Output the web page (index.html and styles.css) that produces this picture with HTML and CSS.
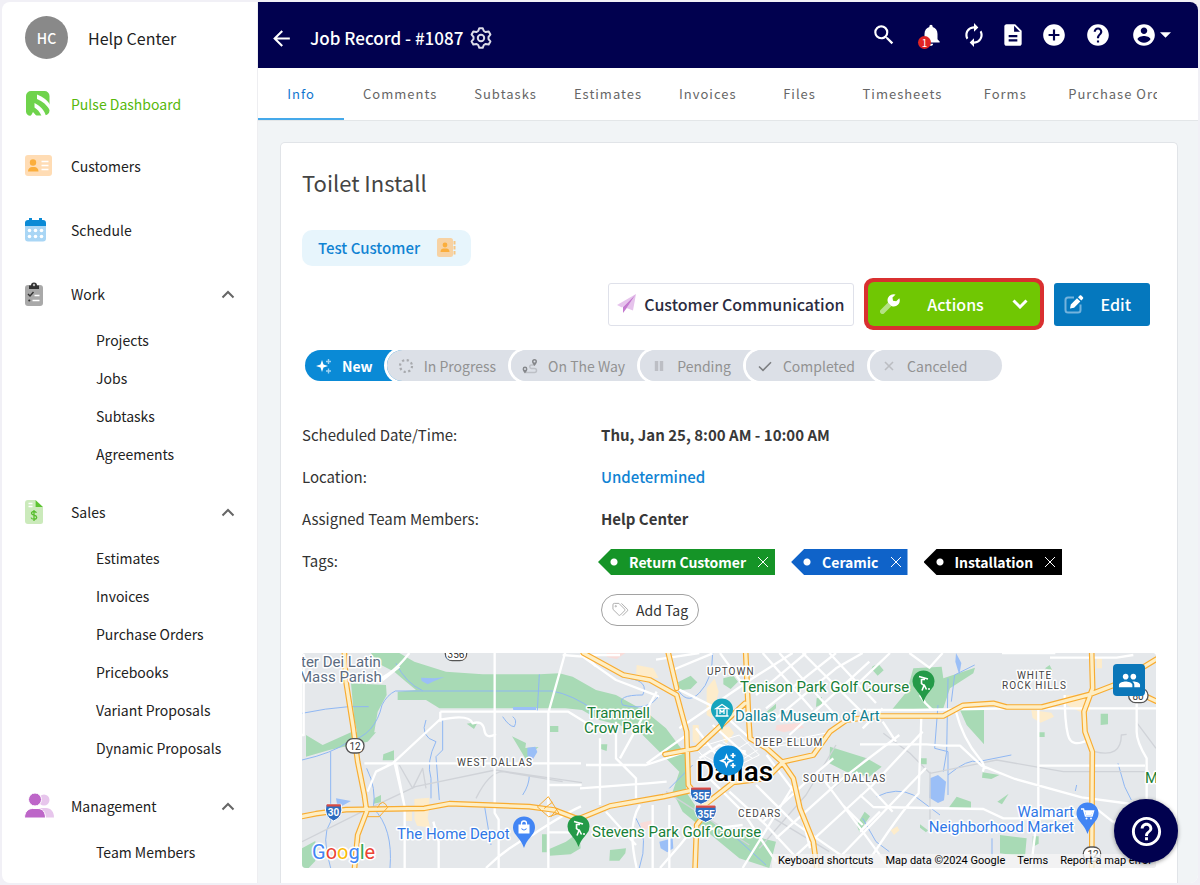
FILE: index.html
```html
<!DOCTYPE html>
<html lang="en">
<head>
<meta charset="utf-8">
<meta name="viewport" content="width=device-width, initial-scale=1">
<title>Job Record - #1087</title>
<link rel="stylesheet" href="styles.css">
</head>
<body>
<div class="app">
  <aside class="sidebar">
    <div class="profile"><span class="avatar">HC</span><span class="profile-name">Help Center</span></div>
    <nav class="nav" aria-label="Main">
      <a class="nav-row nav-active" href="#">
        <svg class="nav-icon" viewBox="0 0 30 30"><path fill="#6fd34c" d="M6 2h13.500a5 5 0 0 1 5 5v14.500a5 5 0 0 1-5 5H6a4 4 0 0 1-5-4V7a5 5 0 0 1 5-5z" transform="translate(1 0)"/><path fill="#fff" d="M13 5.500c6 2.500 11 6 13.500 11v5.500C23 16 18.500 12 13 10zM10.500 14c6 3 10 7.500 11.500 13h-4.500c-1.500-4-4.500-7-7-8.500zM9 23l4 4.500H6.500z"/></svg>
        <span>Pulse Dashboard</span></a>
      <a class="nav-row" href="#">
        <svg class="nav-icon" viewBox="0 0 30 30"><rect x="1" y="4" width="27" height="21" rx="3" fill="#ffdcb4"/><circle cx="9" cy="11.500" r="3.200" fill="#fbae3c"/><path d="M4 20.500c0-3 2-4.500 4-4.500h2.500c2 0 4 1.500 4 4.500z" fill="#fbae3c"/><path d="M17.500 10.500h7M17.500 14.500h7M17.500 18.500h7" stroke="#fff" stroke-width="1.300"/></svg>
        <span>Customers</span></a>
      <a class="nav-row" href="#">
        <svg class="nav-icon" viewBox="0 0 30 30"><path d="M1 11h21v12.500a3 3 0 0 1-3 3H4a3 3 0 0 1-3-3z" fill="#a9d6f5"/><path d="M1 11V8a3 3 0 0 1 3-3h1V3h3v2h7V3h3v2h1a3 3 0 0 1 3 3v3z" fill="#0a8ad6"/><g fill="#fff"><circle cx="5.500" cy="15.500" r="1.800"/><circle cx="11.500" cy="15.500" r="1.800"/><circle cx="17.500" cy="15.500" r="1.800"/><circle cx="5.500" cy="21.500" r="1.800"/><circle cx="11.500" cy="21.500" r="1.800"/><circle cx="17.500" cy="21.500" r="1.800"/></g></svg>
        <span>Schedule</span></a>
      <section class="nav-group">
        <a class="nav-row" href="#">
          <svg class="nav-icon" viewBox="0 0 30 30"><rect x="1" y="6" width="18" height="21" rx="3" fill="#a9a9a9"/><path d="M5 10V6.500h2a3 3 0 1 1 6 0h2V10z" fill="#333"/><circle cx="10" cy="6" r="1.200" fill="#bbb"/><path d="M4 15l2 2 3.500-4" stroke="#333" stroke-width="1.400" fill="none"/><path d="M10.500 16.500h5M8.500 21.500h7" stroke="#fff" stroke-width="1.600"/><circle cx="5.300" cy="21.500" r="1.100" fill="#333"/></svg>
          <span class="nav-label">Work</span><svg class="chev" viewBox="0 0 14 9"><path d="M1.500 7.500L7 2l5.500 5.500"/></svg></a>
        <ul class="subnav"><li><a href="#">Projects</a></li><li><a href="#">Jobs</a></li><li><a href="#">Subtasks</a></li><li><a href="#">Agreements</a></li></ul>
      </section>
      <section class="nav-group">
        <a class="nav-row" href="#">
          <svg class="nav-icon" viewBox="0 0 30 30"><path d="M4 3h7.500v7H19v14.500a2.500 2.500 0 0 1-2.500 2.500H4a3 3 0 0 1-3-3V6a3 3 0 0 1 3-3z" fill="#cbeabb"/><path d="M11.500 3l7.500 7h-7.500z" fill="#5cc431"/><path d="M4.500 6.500h4M4.500 9.500h4" stroke="#fff" stroke-width="1.300"/><path d="M12.500 15.800c-.5-1-1.500-1.300-2.600-1.300-1.400 0-2.400.7-2.400 1.800 0 2.700 5.200 1.200 5.200 4 0 1.200-1.200 1.900-2.600 1.900s-2.600-.5-3-1.600M10 13v11" fill="none" stroke="#57bd2d" stroke-width="1.300"/></svg>
          <span class="nav-label">Sales</span><svg class="chev" viewBox="0 0 14 9"><path d="M1.500 7.500L7 2l5.500 5.500"/></svg></a>
        <ul class="subnav"><li><a href="#">Estimates</a></li><li><a href="#">Invoices</a></li><li><a href="#">Purchase Orders</a></li><li><a href="#">Pricebooks</a></li><li><a href="#">Variant Proposals</a></li><li><a href="#">Dynamic Proposals</a></li></ul>
      </section>
      <section class="nav-group">
        <a class="nav-row" href="#">
          <svg class="nav-icon" viewBox="0 0 30 30"><circle cx="20" cy="9" r="5.500" fill="#e7c6ec"/><path d="M16 26.500V17h6c5 0 8 4 8 9.500z" fill="#e7c6ec"/><circle cx="11" cy="8.500" r="6.500" fill="#bd66c8" stroke="#fff"/><path d="M.5 27c0-6 3.500-9.500 8-9.500h5.500c4.500 0 7.500 3.500 7.500 9.500z" fill="#bd66c8" stroke="#fff"/></svg>
          <span class="nav-label">Management</span><svg class="chev" viewBox="0 0 14 9"><path d="M1.500 7.500L7 2l5.500 5.500"/></svg></a>
        <ul class="subnav"><li><a href="#">Team Members</a></li></ul>
      </section>
    </nav>
  </aside>

  <div class="main">
    <header class="topbar">
      <button class="icon-btn" aria-label="Back"><svg class="ic-back" viewBox="0 0 24 24"><path d="M20 11H7.830l5.590-5.590L12 4l-8 8 8 8 1.410-1.410L7.830 13H20v-2z"/></svg></button>
      <h1 class="page-title">Job Record - #1087</h1>
      <button class="icon-btn" aria-label="Settings"><svg class="ic-gear" viewBox="0 0 24 24"><path d="M10.300 2.200h3.400l1.100 2.800 1.900 1.100 3-.5 1.700 3-1.900 2.300v2.200l1.900 2.300-1.700 3-3-.5-1.900 1.100-1.100 2.800h-3.400L9.200 19l-1.900-1.100-3 .5-1.700-3 1.900-2.300v-2.200L2.600 8.600l1.700-3 3 .5L9.200 5z"/><circle cx="12" cy="12" r="3.200"/></svg></button>
      <div class="tools">
        <button class="icon-btn" aria-label="Search"><svg class="ic" viewBox="0 0 24 24"><path d="M15.500 14h-.79l-.28-.27A6.471 6.471 0 0 0 16 9.500 6.500 6.500 0 1 0 9.500 16c1.610 0 3.090-.59 4.230-1.570l.27.28v.79l5 4.990L20.490 19l-4.990-5zm-6 0C7.010 14 5 11.990 5 9.500S7.010 5 9.500 5 14 7.010 14 9.500 11.990 14 9.500 14z"/></svg></button>
        <button class="icon-btn bell" aria-label="Notifications"><svg class="ic" viewBox="0 0 24 24"><path d="M12 22c1.100 0 2-.9 2-2h-4c0 1.100.89 2 2 2zm6-6v-5c0-3.070-1.640-5.640-4.500-6.320V4c0-.83-.67-1.500-1.500-1.500s-1.500.67-1.500 1.500v.68C7.630 5.360 6 7.920 6 11v5l-2 2v1h16v-1l-2-2z"/></svg><span class="count">1</span></button>
        <button class="icon-btn" aria-label="Sync"><svg class="ic" viewBox="0 0 24 24"><path d="M12 6v3l4-4-4-4v3c-4.420 0-8 3.580-8 8 0 1.570.46 3.030 1.240 4.260L6.700 14.800A5.870 5.870 0 0 1 6 12c0-3.310 2.690-6 6-6zm6.760 1.740L17.300 9.200c.44.84.7 1.790.7 2.800 0 3.310-2.690 6-6 6v-3l-4 4 4 4v-3c4.420 0 8-3.580 8-8 0-1.570-.46-3.030-1.240-4.260z"/></svg></button>
        <button class="icon-btn" aria-label="Notes"><svg class="ic" viewBox="0 0 24 24"><path d="M14 2H6c-1.100 0-1.990.9-1.990 2L4 20c0 1.100.89 2 1.990 2H18c1.100 0 2-.9 2-2V8l-6-6zm2 16H8v-2h8v2zm0-4H8v-2h8v2zm-3-5V3.500L18.500 9H13z"/></svg></button>
        <button class="icon-btn" aria-label="Add"><svg class="ic" viewBox="0 0 24 24"><path d="M12 2C6.480 2 2 6.480 2 12s4.480 10 10 10 10-4.480 10-10S17.520 2 12 2zm5 11h-4v4h-2v-4H7v-2h4V7h2v4h4v2z"/></svg></button>
        <button class="icon-btn" aria-label="Help"><svg class="ic" viewBox="0 0 24 24"><path d="M12 2C6.480 2 2 6.480 2 12s4.480 10 10 10 10-4.480 10-10S17.520 2 12 2zm1 17h-2v-2h2v2zm2.070-7.750l-.9.920C13.450 12.900 13 13.500 13 15h-2v-.5c0-1.100.45-2.100 1.170-2.830l1.240-1.260c.37-.36.59-.86.59-1.410 0-1.100-.9-2-2-2s-2 .9-2 2H8c0-2.210 1.790-4 4-4s4 1.790 4 4c0 .88-.36 1.680-.93 2.250z"/></svg></button>
        <button class="icon-btn" aria-label="Account"><svg class="ic" viewBox="0 0 24 24"><path d="M12 2C6.480 2 2 6.480 2 12s4.480 10 10 10 10-4.480 10-10S17.520 2 12 2zm0 3c1.660 0 3 1.340 3 3s-1.340 3-3 3-3-1.340-3-3 1.340-3 3-3zm0 14.200a7.200 7.200 0 0 1-6-3.220c.03-1.990 4-3.080 6-3.080 1.990 0 5.970 1.090 6 3.080a7.200 7.200 0 0 1-6 3.220z"/></svg><svg class="ic-caret" viewBox="0 0 12 6"><path d="M0 0h12L6 6z"/></svg></button>
      </div>
    </header>

    <nav class="tabs" aria-label="Record sections"><div class="tab-strip">
      <a class="tab tab-on" href="#">Info</a><a class="tab" href="#">Comments</a><a class="tab" href="#">Subtasks</a><a class="tab" href="#">Estimates</a><a class="tab" href="#">Invoices</a><a class="tab" href="#">Files</a><a class="tab" href="#">Timesheets</a><a class="tab" href="#">Forms</a><a class="tab" href="#">Purchase Orders</a>
    </div></nav>

    <main class="content">
      <article class="card">
        <h2 class="job-title">Toilet Install</h2>
        <a class="customer" href="#">Test Customer
          <svg class="ic-book" viewBox="0 0 20 20"><rect width="16" height="19" rx="2.500" fill="#f7d2a3"/><circle cx="8" cy="7" r="2.400" fill="#fbae3c"/><path d="M3.500 14c0-2.500 1.500-3.500 3-3.500h3c1.500 0 3 1 3 3.500z" fill="#fbae3c"/><path d="M17.500 3v3.500M17.500 8v3.500M17.500 13v3.500" stroke="#f7c684" stroke-width="2"/></svg></a>
        <div class="actions">
          <button class="btn btn-comm"><svg class="ic-20" viewBox="0 0 20 20"><path d="M19 0L0 11l5 2.500z" fill="#e6c3ec"/><path d="M19 0L9.500 14l6.500 2.500z" fill="#e6c3ec"/><path d="M19 0L6 13v6l3-4z" fill="#c47ad0"/></svg>Customer Communication</button>
          <span class="highlight"><button class="btn btn-actions"><svg class="ic-20" viewBox="0 0 20 20"><path d="M2.500 17.500l7-7" stroke="#b4e283" stroke-width="5" stroke-linecap="round"/><path d="M19.300 4.200l-3.100 3.100-3.200-.5-.5-3.200L15.600.6A6 6 0 0 0 8 8.500l3.500 3.500a6 6 0 0 0 7.800-7.800z" fill="#fff"/></svg><span>Actions</span><svg class="ic-down" viewBox="0 0 16 10"><path d="M1.500 1.500L8 8l6.500-6.500"/></svg></button></span>
          <button class="btn btn-edit"><svg class="ic-20" viewBox="0 0 20 20"><path d="M10 3.500H4a2.500 2.500 0 0 0-2.500 2.500v10A2.500 2.500 0 0 0 4 18.500h10a2.500 2.500 0 0 0 2.500-2.500v-5.500" fill="none" stroke="#74b3dd" stroke-width="2"/><path d="M6 14.500l.8-4L13 4.200l3.300 3.300-6.200 6.200zM14 3.200l1.500-1.500c.6-.6 1.400-.6 2 0l1.300 1.300c.6.600.6 1.400 0 2l-1.500 1.500z" fill="#fff"/></svg><span>Edit</span></button>
        </div>
        <ol class="status">
          <li><button class="step step-on"><svg class="ic-16" viewBox="0 0 16 16"><path fill="#fff" d="M6 2l1.500 4.500L12 8l-4.500 1.500L6 14l-1.500-4.500L0 8l4.500-1.500z"/><path d="M12.500 1v5M10 3.500h5M12.500 10.500v5M10 13h5" stroke="#9fd3f3" stroke-width="1.400"/></svg>New</button></li>
          <li><button class="step"><svg class="ic-16" viewBox="0 0 16 16"><circle cx="8" cy="8" r="6" fill="none" stroke="#a8aaae" stroke-width="2.200" stroke-dasharray="2.200 2.510"/></svg>In Progress</button></li>
          <li><button class="step"><svg class="ic-16" viewBox="0 0 16 16"><path d="M4 14.500h8.500a2 2 0 0 0 0-4h-3a1.700 1.700 0 0 1 0-3.500h2.500" fill="none" stroke="#bdc0c6" stroke-width="1.500"/><path d="M12.500 8C11 6 10 4.700 10 3.400a2.500 2.500 0 0 1 5 0C15 4.700 14 6 12.500 8zM3 15.500C1.500 13.500.6 12.300.6 11a2.400 2.400 0 0 1 4.800 0c0 1.300-.9 2.500-2.400 4.500z" fill="#85878b"/><circle cx="12.500" cy="3.400" r="1" fill="#dce0e7"/><circle cx="3" cy="11" r="1" fill="#dce0e7"/></svg>On The Way</button></li>
          <li><button class="step"><svg class="ic-16" viewBox="0 0 16 16"><path d="M5.500 3v10M10.500 3v10" stroke="#bcbec4" stroke-width="3.400"/></svg>Pending</button></li>
          <li><button class="step"><svg class="ic-16" viewBox="0 0 16 16"><path d="M2 8.500l4 3.800 8-8" fill="none" stroke="#7d7f82" stroke-width="1.600"/></svg>Completed</button></li>
          <li class="last"><button class="step step-last"><svg class="ic-16" viewBox="0 0 16 16"><path d="M4 4l8 8M12 4l-8 8" stroke="#bbbdc2" stroke-width="1.600"/></svg>Canceled</button></li>
        </ol>
        <dl class="facts">
          <dt>Scheduled Date/Time:</dt><dd>Thu, Jan 25, 8:00 AM - 10:00 AM</dd>
          <dt>Location:</dt><dd><a href="#">Undetermined</a></dd>
          <dt>Assigned Team Members:</dt><dd>Help Center</dd>
          <dt>Tags:</dt>
          <dd class="tag-cell">
            <div class="tags">
              <span class="tag tag-green">Return Customer<button aria-label="Remove Return Customer"><svg viewBox="0 0 12 12"><path d="M1 1l10 10M11 1L1 11"/></svg></button></span>
              <span class="tag tag-blue">Ceramic<button aria-label="Remove Ceramic"><svg viewBox="0 0 12 12"><path d="M1 1l10 10M11 1L1 11"/></svg></button></span>
              <span class="tag tag-black">Installation<button aria-label="Remove Installation"><svg viewBox="0 0 12 12"><path d="M1 1l10 10M11 1L1 11"/></svg></button></span>
            </div>
            <button class="add-tag"><svg class="ic-tags" viewBox="0 0 18 16"><path d="M1 2.500A1.500 1.500 0 0 1 2.500 1h4.800l6 6a1.300 1.300 0 0 1 0 1.800l-4.400 4.500a1.300 1.300 0 0 1-1.800 0L1 7.300zM10 1l6.300 6.300c.5.500.5 1.200 0 1.700l-5 5"/><circle cx="4" cy="4" r=".7"/></svg>Add Tag</button>
          </dd>
        </dl>

        <section class="map" aria-label="Map">
          <svg class="map-art" viewBox="0 0 854 215" preserveAspectRatio="xMidYMid slice">
            <g transform="translate(-6 -8) scale(.33333)" fill="none" stroke-linejoin="round">
              <path fill="#e5e8eb" d="M0 0h2700v700H0z"/>
              <g fill="#a8dab5">
                <path d="M225 24h85l45 26 95 30 110 8h170l60-3 40 10 70 40 60 15 90 50 60 50 60 80v110l40 60 50 40 100 30 80 20-20 79-90-29-60-50-110-90-30-60 20-60-40-40-70-70-70-30-60-15-52-30-50-5H430l-40-25h-85v-25l55-5-30-25-35-30-50-25z"/>
                <path d="M165 115l105 5 2 30-27 50-10 60-30 30h-15l-15-65zM30 270l50 30 85-38h75l-25 28-115 25-70 20zM18 610l40-22v60l-20 21H18zM262 328l32-12v30h-34zM235 460l20-10v22l-22 4zM512 236l34-6-12 22zM648 274l42 20-2 15 40-3-30 25-5 18zM762 243h25v18h-25zM738 568h14v54h-14zM760 612l50-22 40-30 4 50-30 18-62 4zM1146 112l38-20 20 20-20 20-32 4zM1282 100l30-8 14 18-22 22-22-14zM914 298h20l-2 20-18-6zM942 615l48-5-2 15-18 22h-30zM1412 200l28-24v14l-20 16zM1562 160l16-4v22l-18 8zM1730 64l18-8v30l-22-12zM1682 540l24-40 16 14-32 46z"/>
                <path d="M1602 305l110 35 45 25-37 30-70-15-50-25zM1852 70l85-5 5 35 95-32-5 17-70 45-20 60-155 5 45-55zM1992 195h72v103l-52-58zM1957 490l25-35 43 15v22zM2112 570l80 10-5 55-75-10zM1727 72l20-16 16 20-18 16zM2247 70l14-10 10 20zM2414 206h22v32l-22 2zM2226 262h20v14h-18zM1874 340h18v18h-18zM2060 382l50 8-24 12-28-4zM2104 470l34-24-20 32zM1872 538l24 18-6 6-18-14zM2210 574h18v22l-18 10z"/>
              </g>
              <g fill="#fdeccb"><path d="M355 462l45-4v30l-5 30 8 30-40-6-8-20zM330 500h18v28h-18zM1022 60l50 10 16 30-68-8zM1190 240h18l4 60-22-10zM1232 130l24-30 12 40-20 80-16-10zM1270 250l30-6 14 20-24 34zM2206 195l60 8 8 12-40 18-24-14zM2308 150h74v50h-30l-40-20zM2402 40h16v30h-16zM1784 556l20-12 6 12-16 14z"/></g>
              <g fill="#f9dcd9"><path d="M932 24h56l-26 18-30-6zM1442 240l70-6 12 14-60 14-26-8zM1032 534l36-8-4 20-26 12z"/></g>
              <g fill="#9bbff7"><path d="M120 460l45 8-40 22zM375 98l40 2 30-4-30 12-20 10-18-10zM650 186h70v9h-68zM694 308l24-3 6 16-16 26-14-16zM1902 400l24-10 24 20-6 56-18 8-26-16zM1090 590l40-10 2 30-18 12-20-12zM1980 24l16 30-6 36-12-40z"/></g>
              <g stroke="#8fb7f3" stroke-width="3">
                <path d="M18 345q90-20 140-55 80-20 100-110 15-30 40-42h470q60 10 130 60M300 55q30 60 80 82M18 205q70-15 140-20h60M104 320v210q-30 40 0 139M212 370q30 60 20 120 60 60 50 179M390 225q-20 50 30 65-30 60-15 110v60M440 225v90l-20 20 10 130M620 215q20 30 35 30 10-20-5-30M700 390q0 30-20 60M730 88l-6 110M565 480l20 120M1000 100q60 10 40 50-80 0-60 30 80 20 110-30M1250 24q0 80-40 120t-70-20M1120 430l70-70M1020 520q40 60 10 149M1300 560l110 100M1700 520l40 70 40 30M1956 100l-4 220-10 60M1926 180l-10 130 40 10v130M1956 390q60-50 90-40l100-20M1742 455q60-30 110-5l80 60M2036 60l-60 30-10 80M2466 355l20 70 20 40M2342 420l-4 18M2088 580v60"/>
              </g>
              <g stroke="#d0d3d8" stroke-width="4">
                <path d="M18 590l170-85 170-80 240-50 260 38M540 460q40-80 80-80l180 30M310 360l40 70 30-60 10 60M1620 300l-90 150-140 160M1712 340l-100 90M1400 500l200 120M1110 440l250 160M1762 265l80 60 60 60 200-40 200 35h260M1902 380v180M2396 320q80 20 80-50l16-2M2520 230l60 80"/>
              </g>
              <g stroke="#fff" stroke-width="7">
                <path d="M18 30h5v240H0M205 355h650M596 24v480l12 20v145M757 200v469M433 200v30M433 200h325l50-178M860 24l40 40M215 440l25-60 50-25 140-130q90-20 100 10 30-10 35 20t35 12M300 355l26 130M296 355l30 130v184M412 530l16 60v79M757 200h60l80 50M757 420h100M570 669q60-60 140-100 90-60 145-85M340 24q-60 80-130 90M757 562h100M260 105l50-40"/>
                <path d="M852 30h120M800 30l60 5 100 70 130 50M870 360h180l120-40M852 430q150-10 260-20M912 280v200M960 230v110l60 60v60M1032 480q-40 60-10 189M1120 480v189M930 500l90 100M1070 480v189M1052 355l120-85M1082 140l-110 200M1210 24l-130 20M1142 130l120 60 100 90M1150 250l220-150 120-76M1130 75l120-50M1180 560l160-20M1272 24l80 110M1380 150l150-126M1410 190l210-166M1440 220l180-150 80-46M1480 270l240-220M1520 24l200 200M1450 24l180 200M1600 24l140 150M1400 24l150 170"/>
                <path d="M1232 500l-80 100-60 69M1240 400l100 100 100 150M1300 440l110 100 120 129M1380 420l110 110 200 139M1402 530l140-130 70-60M1440 580l200-180 170-130M1490 640l240-220 150-160M1600 669l290-300M1580 400l120 160 80 109M1680 380l110 120M1640 480l60 60M1340 669l160-260M1412 330l90 120 40 160M1200 250l100 130M1250 240l100 90M1210 340l60-40 80 20"/>
                <path d="M1692 110l90-86M1712 195h140l300-5h428M1876 215l-8 230q-60 60-160 220M1692 298h200l50 4h50l65 60 100 40 200 55 150 20h100M1872 150l16 24 20 20M1840 24l60 44 40-44M1980 200q20 80 70 140 20 20 10 40M2227 195v290l-22 184M2227 362h320M2118 24h160M2262 38h200l50-8M2306 150q0 80 10 120t60 15M2522 100v160q0 30 30 80v140M1692 450l40 36 330 6 60 28h200l80-20M2400 490l50 40h60M1760 230l40 60M1700 250l60-60M1692 560l60-60"/>
              </g>
              <g stroke="#fff" stroke-width="3"><path d="M1200 310l130-40 60 60-120 60zM1220 330l110 60M1250 310l100 60M1280 290l90 50M1230 370l130-80M1255 395l130-80M1460 290l150-30M1400 310l200-30"/></g>
              <g stroke-linecap="round">
                <path stroke="#f8ac31" stroke-width="17" d="M145 20l5 90 22 140 13 100 20 100 7 50-27 70-10 105M0 518l60-12 90-12 235-4 75-14 240 9 75 10 71 27 6-2 90-37 160-28 80-18M1232 475l80-63 100-12 50-50 90-20 50-70 50-35 100-12h190l60-32 90-6 40 11h105l145-38 70-27 128-78M862 24l120 66 80 15 80 45 30 110 5 160 55 70M1117 24l25 106M1349 20l8 180 5 80 50 30 45 40 35 50 20 90 40 100 12 90M1107 328l95-18 80-75 65-60M1232 500l-30 40-5 135M2387 20l3 110-26 70 3 60 22 60-2 360M2552 155l30 14"/>
                <path stroke="#feeec4" stroke-width="10" d="M145 20l5 90 22 140 13 100 20 100 7 50-27 70-10 105M0 518l60-12 90-12 235-4 75-14 240 9 75 10 71 27 6-2 90-37 160-28 80-18M1232 475l80-63 100-12 50-50 90-20 50-70 50-35 100-12h190l60-32 90-6 40 11h105l145-38 70-27 128-78M862 24l120 66 80 15 80 45 30 110 5 160 55 70M1117 24l25 106M1349 20l8 180 5 80 50 30 45 40 35 50 20 90 40 100 12 90M1107 328l95-18 80-75 65-60M1232 500l-30 40-5 135M2387 20l3 110-26 70 3 60 22 60-2 360M2552 155l30 14"/>
                <path stroke="#f8ac31" stroke-width="3" d="M215 515h35l25-28q-15-30-30 0M725 485l32-30 32 50-30 10zM745 490l24-18M765 515l20-25"/>
              </g>
              <g stroke="#555" stroke-width="4" fill="#fff"><rect x="150" y="281" width="54" height="43" rx="21"/><rect x="448" y="4" width="64" height="43" rx="21"/><rect x="2362" y="606" width="52" height="43" rx="21"/><rect x="2498" y="130" width="58" height="43" rx="21"/></g>
              <g fill="#2d6cc0" stroke="#fff" stroke-width="3"><path d="M90 478h46q8 38-23 50-31-12-23-50zM1184 428h62q8 38-31 50-39-12-31-50zM1198 482h62q8 38-31 50-39-12-31-50z"/></g>
              <path stroke="#d84a43" stroke-width="7" d="M92 481h42M1186 431h58M1200 485h58"/>
            </g>
            <g class="m-road"><text x="53" y="97">12</text><text x="154" y="5">356</text><text x="791" y="205">12</text><text x="836" y="47">80</text></g>
            <g class="m-shield"><text x="31.500" y="163">30</text><text x="399" y="147">35E</text><text x="404" y="165">35E</text></g>
            <g class="m-poi m-slate"><text x="-1" y="14">ter Dei Latin</text><text x="-3" y="29">Mass Parish</text></g>
            <g class="m-poi m-green"><text x="285" y="65">Trammell</text><text x="282" y="80">Crow Park</text><text x="438" y="39">Tenison Park Golf Course</text><text x="290" y="184">Stevens Park Golf Course</text><text x="843" y="130">M</text></g>
            <g class="m-poi m-teal"><text x="433" y="68">Dallas Museum of Art</text></g>
            <g class="m-poi m-blue"><text x="95" y="186">The Home Depot</text><text x="772" y="164" text-anchor="end">Walmart</text><text x="772" y="179" text-anchor="end">Neighborhood Market</text></g>
            <g class="m-area"><text x="155" y="113">WEST DALLAS</text><text x="405" y="22">UPTOWN</text><text x="453" y="93">DEEP ELLUM</text><text x="501" y="129">SOUTH DALLAS</text><text x="436" y="164">CEDARS</text><text x="715" y="26">WHITE</text><text x="700" y="36">ROCK HILLS</text></g>
            <text class="m-city" x="394" y="128">Dallas</text>
            <g>
              <path fill="#4285f4" d="M222 195c-2-6-5-9-8-13a11 11 0 1 1 16 0c-3 4-6 7-8 13z"/><path fill="#fff" d="M216.500 171.500h11v9h-11z"/><path d="M219.500 172v-1.500a2.500 2.500 0 0 1 5 0v1.500" fill="none" stroke="#fff" stroke-width="1.300"/><path d="M219.500 175.500q2.500 3 5 0" fill="none" stroke="#4285f4" stroke-width="1.100"/>
              <path fill="#249a48" d="M276.500 194c-2-6-5-9-8-13a11 11 0 1 1 16 0c-3 4-6 7-8 13zM621.500 49c-2-6-5-9-8-13a11 11 0 1 1 16 0c-3 4-6 7-8 13z"/>
              <path d="M272 168.500l9 2.500M278 171.500h-3.500v4l2.500 2-2 5M277 176.500l2.500 5M617 23.500l9 2.500M623 26.500h-3.500v4l2.500 2-2 5M622 31.500l2.500 5" fill="none" stroke="#fff" stroke-width="1.600"/><circle cx="282" cy="181" r="1" fill="#fff"/><circle cx="627" cy="36" r="1" fill="#fff"/>
              <path fill="#17a5bd" d="M420 77c-2-6-5-9-8-13a11 11 0 1 1 16 0c-3 4-6 7-8 13z"/><path d="M414 55.500l6-4 6 4zM415 56.500v6M425 56.500v6M413.500 63h13M418 61v-4l2 2 2-2v4" fill="none" stroke="#fff" stroke-width="1.300"/>
              <path fill="#4285f4" d="M785.500 181c-2-6-5-9-8-13a11 11 0 1 1 16 0c-3 4-6 7-8 13z"/><path d="M779 156h2.500l2 7h6.500l1.500-5h-9" fill="none" stroke="#fff" stroke-width="1.500"/><path d="M783 158h8l-1.500 4h-5.500z" fill="#fff"/><circle cx="784.500" cy="165.500" r="1" fill="#fff"/><circle cx="789" cy="165.500" r="1" fill="#fff"/>
              <circle cx="426.500" cy="107.500" r="15" fill="#0a8ad6"/><path d="M424.500 102.500l1.500 3.700 3.800 1.500-3.800 1.500-1.500 3.800-1.500-3.800-3.800-1.500 3.800-1.500z" fill="none" stroke="#fff" stroke-width="1.700"/><path d="M431 100v5M428.500 102.500h5M431 110v5M428.500 112.500h5" stroke="#fff" stroke-width="1.700"/>
            </g>
            <text class="m-google" x="10" y="206"><tspan fill="#4285f4">G</tspan><tspan fill="#ea4335">o</tspan><tspan fill="#fbbc05">o</tspan><tspan fill="#4285f4">g</tspan><tspan fill="#34a853">l</tspan><tspan fill="#ea4335">e</tspan></text>
          </svg>
          <button class="map-team" aria-label="Show team"><svg viewBox="0 0 24 24"><path d="M16 11c1.660 0 2.990-1.340 2.990-3S17.660 5 16 5c-1.660 0-3 1.340-3 3s1.340 3 3 3zm-8 0c1.660 0 2.990-1.340 2.990-3S9.660 5 8 5C6.340 5 5 6.340 5 8s1.340 3 3 3zm0 2c-2.330 0-7 1.170-7 3.500V19h14v-2.500c0-2.330-4.670-3.500-7-3.500zm8 0c-.29 0-.62.02-.97.05 1.160.84 1.970 1.970 1.970 3.450V19h6v-2.500c0-2.330-4.670-3.500-7-3.500z"/></svg></button>
          <div class="map-legal"><button>Keyboard shortcuts</button><span>Map data ©2024 Google</span><a href="#">Terms</a><a href="#">Report a map error</a></div>
        </section>
      </article>
    </main>
  </div>
  <button class="help-fab" aria-label="Help center"><svg viewBox="0 0 24 24"><path d="M11 18h2v-2h-2v2zm1-16C6.480 2 2 6.480 2 12s4.480 10 10 10 10-4.480 10-10S17.520 2 12 2zm0 18c-4.410 0-8-3.590-8-8s3.590-8 8-8 8 3.590 8 8-3.590 8-8 8zm0-14c-2.210 0-4 1.790-4 4h2c0-1.100.9-2 2-2s2 .9 2 2c0 2-3 1.750-3 5h2c0-2.250 3-2.500 3-5 0-2.210-1.790-4-4-4z"/></svg></button>
</div>
</body>
</html>
```
FILE: styles.css
```css
* { box-sizing: border-box; }
body {
  margin: 0;
  height: 100vh;
  padding: 2px;
  background: #f1f0f6;
  color: #222;
  font: 14px/20px "Noto Sans CJK SC", "Open Sans", sans-serif;
  overflow: hidden;
}
a { color: inherit; text-decoration: none; }
button { font: inherit; color: inherit; border: 0; padding: 0; background: none; cursor: pointer; }
svg { display: block; flex: none; }
h1, h2, ul, ol, dl, dd { margin: 0; padding: 0; list-style: none; }

.app {
  position: relative;
  display: grid;
  grid-template-columns: 256px minmax(0, 1fr);
  height: 100%;
  border-radius: 8px;
  overflow: hidden;
  background: #fff;
}

/* Sidebar */
.sidebar { overflow: hidden; border-right: 1px solid #eeeef1; }
.profile { display: flex; align-items: center; gap: 20px; height: 77px; padding: 0 23px 6px; }
.avatar {
  display: grid; place-items: center;
  width: 43px; height: 43px; border-radius: 50%;
  background: #898989; color: #fff; font-weight: 500;
}
.profile-name { font-size: 16px; }
.nav { display: flex; flex-direction: column; gap: 10px; }
.nav-row { display: flex; align-items: center; gap: 17px; height: 54px; padding: 0 22px; }
.nav-active { height: 50px; color: #57b80b; }
.nav-icon { width: 30px; height: 30px; }
.nav-label { flex: 1; }
.chev { width: 14px; height: 9px; fill: none; stroke: #666; stroke-width: 2; }
.subnav { padding-bottom: 2px; }
.subnav a { display: block; padding: 9px 0 9px 94px; }

/* Top bar */
.main { display: flex; flex-direction: column; min-width: 0; }
.topbar {
  display: flex; align-items: center; flex: none;
  height: 66px; padding: 0 17px 0 11px;
  background: #01014f; color: #fff;
}
.icon-btn { display: flex; align-items: center; justify-content: center; }
.topbar svg { fill: #fff; }
.ic { width: 26px; height: 26px; }
.ic-back { width: 25px; height: 25px; }
.topbar .page-title { margin: 6px 6px 0 16px; font-size: 17px; line-height: 26px; font-weight: 500; flex: none; }
.topbar > .icon-btn { margin-top: 6px; }
.topbar .ic-gear { width: 24px; height: 24px; fill: none; stroke: #dcdce8; stroke-width: 2; stroke-linejoin: round; }
.tools { display: grid; grid-template-columns: 46px 47px 40px 38px 43px 46px 60px; margin-left: auto; }
.bell { position: relative; }
.count {
  position: absolute; left: 11px; top: 14px;
  width: 13px; height: 13px; border-radius: 50%;
  background: #e02424; font-size: 10px; line-height: 13px; text-align: center;
}
.ic-caret { width: 11px; height: 6px; margin-left: 3px; }

/* Tabs */
.tabs { flex: none; padding-right: 41px; background: #fff; border-bottom: 1px solid #e3e6e8; }
.tab-strip { display: flex; gap: 1px; overflow: hidden; }
.tab {
  flex: none; min-width: 88px; padding: 16px 18px; height: 52px;
  color: #666; font-size: 13px; letter-spacing: 1px; text-align: center; border-bottom: 2px solid transparent;
}
.tab-on { min-width: 86px; color: #1076cf; border-color: #45a9ea; }

/* Record */
.content { flex: 1; min-height: 0; padding: 21px 20px 0 22px; background: #f1f4f6; }
.card {
  height: 100%; padding: 25px 21px 0;
  background: #fff; border: 1px solid #e1e4e8; border-bottom: 0; border-radius: 5px 5px 0 0;
}
.job-title { font-size: 22px; line-height: 28px; font-weight: 400; color: #444; }
.customer {
  display: inline-flex; align-items: center; gap: 17px;
  margin-top: 34px; padding: 6px 14px 6px 16px; border-radius: 10px;
  background: #e7f5fc; color: #1083d3; font-size: 15px; line-height: 24px; font-weight: 500;
}
.ic-book { width: 20px; height: 20px; }
.actions { display: flex; justify-content: flex-end; align-items: center; gap: 10px; margin-top: 12px; padding-right: 6px; }
.btn { display: flex; align-items: center; height: 43px; border-radius: 3px; font-size: 16px; line-height: 24px; font-weight: 500; }
.btn-comm { gap: 7px; padding: 0 8px; border: 1px solid #dfe1ea; color: #2b2b40; }
.highlight { padding: 4px; border-radius: 9px; background: #d93030; }
.btn-actions { width: 172px; height: 44px; justify-content: space-between; padding: 0 12px; border-radius: 6px; background: #70c703; color: #fff; }
.btn-edit { gap: 17px; padding: 0 19px 0 10px; background: #0578be; color: #fff; }
.ic-20 { width: 20px; height: 20px; }
.ic-down { width: 16px; height: 10px; fill: none; stroke: #fff; stroke-width: 3; }

.status { display: flex; margin: 20px 0 0 3px; }
.step {
  display: flex; align-items: center; gap: 10px;
  height: 31px; padding: 0 30px 0 11px; border-radius: 16px 0 0 16px;
  background: #dce0e7; color: #929292; white-space: nowrap;
}
.status li + li { margin-left: -15px; border-radius: 16px 0 0 16px; box-shadow: 0 0 0 3px #fff; }
.status .last { border-radius: 16px; }
.step-on { padding-right: 29px; background: #0a8ad6; color: #fff; font-weight: 700; }
.step-last { border-radius: 16px; padding-right: 35px; }
.ic-16 { width: 16px; height: 16px; }

.facts { display: grid; grid-template-columns: 299px 1fr; row-gap: 18px; margin-top: 42px; font-size: 15px; line-height: 24px; color: #333; }
.facts dd { font-weight: 700; color: #383838; }
.facts dd a { color: #1083d3; font-weight: 500; }
.tags { display: flex; gap: 16px; margin-left: -3px; height: 26px; }
.tag {
  display: flex; align-items: center; gap: 11px; padding: 0 6px 0 31px; height: 26px;
  clip-path: polygon(0 50%, 13px 0, 100% 0, 100% 100%, 13px 100%);
  color: #fff; font-size: 14px; font-weight: 700;
}
.tag-green { background: radial-gradient(circle at 16px 50%, #fff 3px, #159427 4px); }
.tag-blue { background: radial-gradient(circle at 16px 50%, #fff 3px, #0f63c9 4px); }
.tag-black { background: radial-gradient(circle at 16px 50%, #fff 3px, #000 4px); }
.tag svg { width: 12px; height: 12px; stroke: #fff; fill: none; }
.add-tag {
  display: flex; align-items: center; gap: 7px; margin-top: 19px; padding: 5px 10px;
  border: 1px solid #a2a2a2; border-radius: 16px; font-size: 14px; line-height: 20px; font-weight: 400; color: #333;
}
.ic-tags { width: 17px; height: 16px; fill: none; stroke: #aaa; }

/* Map */
.map { position: relative; height: 215px; margin-top: 27px; border-radius: 4px; overflow: hidden; background: #e5e8eb; font-family: Roboto, sans-serif; }
.map-art { width: 100%; height: 100%; }
.map-art text { paint-order: stroke; stroke: #fff; stroke-width: 3px; stroke-linejoin: round; }
.map-art .m-road text { font-size: 10px; fill: #333; text-anchor: middle; }
.map-art .m-shield text { font-size: 10px; font-weight: 700; fill: #fff; stroke: none; text-anchor: middle; }
.m-poi { font-size: 15px; }
.m-slate { fill: #5b6b7f; }
.m-green { fill: #188038; }
.m-teal { fill: #12808f; }
.m-blue { fill: #2f77e6; }
.m-area { font-size: 10px; letter-spacing: 1px; fill: #444; }
.m-city { font-size: 28px; font-weight: 500; fill: #000; }
.m-google { font: 400 20px Roboto, sans-serif; }
.map-team {
  position: absolute; top: 11px; right: 11px; width: 32px; height: 32px;
  display: grid; place-items: center; border-radius: 4px; background: #0b77b9;
}
.map-team svg { width: 23px; height: 23px; fill: #fff; }
.map-legal {
  position: absolute; right: 0; bottom: 0; display: flex; gap: 12px; padding: 0 4px 0 6px;
  background: rgba(245, 245, 245, .75); color: #000; font-size: 11px; line-height: 14px;
}

.help-fab {
  position: absolute; right: 20px; bottom: 20px; width: 64px; height: 64px;
  display: grid; place-items: center; border-radius: 50%;
  background: #01014f; box-shadow: 0 1px 4px rgba(0, 0, 0, .4);
}
.help-fab svg { width: 35px; height: 35px; fill: #fff; }
```
